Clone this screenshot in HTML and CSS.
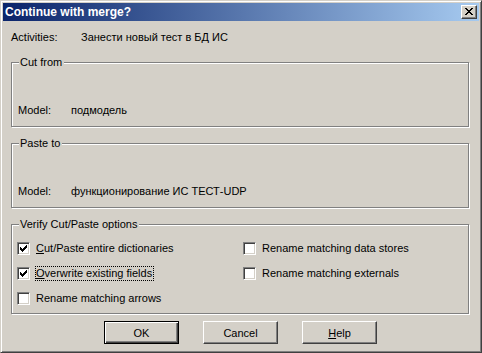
FILE: index.html
```html
<!DOCTYPE html>
<html lang="en">
<head>
<meta charset="utf-8">
<title>Continue with merge?</title>
<link rel="stylesheet" href="styles.css">
</head>
<body>
<div class="window">
  <div class="titlebar">
    <span class="title">Continue with merge?</span>
    <button class="close" aria-label="Close">
      <svg width="8" height="7" viewBox="0 0 8 7" shape-rendering="crispEdges"><path d="M0 0h2v1h-2z M6 0h2v1h-2z M1 1h2v1h-2z M5 1h2v1h-2z M2 2h4v1h-4z M3 3h2v1h-2z M2 4h4v1h-4z M1 5h2v1h-2z M5 5h2v1h-2z M0 6h2v1h-2z M6 6h2v1h-2z" fill="#000"/></svg>
    </button>
  </div>
  <div class="content">
    <div class="activities"><span class="act-label">Activities:</span><span>Занести новый тест в БД ИС</span></div>

    <div class="group info">
      <div class="group-title">Cut from</div>
      <div class="model"><span class="model-label">Model:</span><span>подмодель</span></div>
    </div>

    <div class="group info">
      <div class="group-title">Paste to</div>
      <div class="model"><span class="model-label">Model:</span><span>функционирование ИС ТЕСТ-UDP</span></div>
    </div>

    <div class="group options">
      <div class="group-title">Verify Cut/Paste options</div>
      <div class="opts">
        <div class="opt"><span class="cb"><svg width="11" height="11" viewBox="0 0 11 11" shape-rendering="crispEdges"><path d="M2 4h1v3h-1z M3 5h1v3h-1z M4 6h1v3h-1z M5 5h1v3h-1z M6 4h1v3h-1z M7 3h1v3h-1z M8 2h1v3h-1z" fill="#000"/></svg></span><span class="txt"><u>C</u>ut/Paste entire dictionaries</span></div>
        <div class="opt"><span class="cb"></span><span class="txt">Rename matching data stores</span></div>
        <div class="opt"><span class="cb"><svg width="11" height="11" viewBox="0 0 11 11" shape-rendering="crispEdges"><path d="M2 4h1v3h-1z M3 5h1v3h-1z M4 6h1v3h-1z M5 5h1v3h-1z M6 4h1v3h-1z M7 3h1v3h-1z M8 2h1v3h-1z" fill="#000"/></svg></span><span class="txt focus"><u>O</u>verwrite existing fields</span></div>
        <div class="opt"><span class="cb"></span><span class="txt">Rename matching externals</span></div>
        <div class="opt"><span class="cb"></span><span class="txt">Rename matching arrows</span></div>
      </div>
    </div>

    <div class="buttons">
      <button class="btn default">OK</button>
      <button class="btn">Cancel</button>
      <button class="btn"><u>H</u>elp</button>
    </div>
  </div>
</div>
</body>
</html>
```

FILE: styles.css
```css
html, body {
  margin: 0;
  padding: 0;
  background: #d4d0c8;
}
body {
  font-family: "Liberation Sans", Arial, sans-serif;
  font-size: 11px;
  color: #000;
}
.window {
  width: 482px;
  height: 353px;
  box-sizing: border-box;
  border: 1px solid;
  border-color: #d4d0c8 #404040 #404040 #d4d0c8;
  box-shadow: inset 1px 1px 0 #fff, inset -1px -1px 0 #808080;
  padding: 2px;
  background: #d4d0c8;
  display: flex;
  flex-direction: column;
}
.titlebar {
  height: 18px;
  flex: none;
  display: flex;
  align-items: center;
  justify-content: space-between;
  background: linear-gradient(to right, #0a246a, #a6caf0);
  padding: 0 2px 0 2px;
}
.title {
  color: #fff;
  font-weight: bold;
  font-size: 12px;
  line-height: 18px;
}
.close {
  width: 16px;
  height: 14px;
  box-sizing: border-box;
  padding: 0 0 0 3px;
  margin: 0;
  border: 1px solid;
  border-color: #fff #404040 #404040 #fff;
  box-shadow: inset -1px -1px 0 #808080;
  background: #d4d0c8;
  display: flex;
  align-items: flex-start;
  padding-top: 2px;
}
.close svg { display: block; }
.content {
  display: flex;
  flex-direction: column;
}
.activities {
  margin: 10px 0 0 8px;
  line-height: 13px;
  height: 13px;
  display: flex;
}
.act-label { width: 70px; }
.group {
  margin: 18px 0 0 8px;
  width: 458px;
  box-sizing: border-box;
  border: 1px solid #808080;
  box-shadow: 1px 1px 0 #fff, inset 1px 1px 0 #fff;
  padding: 0 6px 9px 6px;
}
.group + .group { margin-top: 16px; }
.group-title {
  margin: -7px 0 0 1px;
  padding: 0 2px 0 1px;
  width: max-content;
  line-height: 13px;
  background: #d4d0c8;
}
.model {
  margin-top: 35px;
  line-height: 13px;
  display: flex;
}
.model-label { width: 53px; }
.options { padding-bottom: 2px; }
.opts {
  margin: 5px 0 0 -1px;
  display: grid;
  grid-template-columns: 226px 1fr;
  grid-auto-rows: 25px;
  align-items: center;
}
.opt {
  display: flex;
  align-items: center;
}
.cb {
  width: 13px;
  height: 13px;
  box-sizing: border-box;
  border: 1px solid;
  border-color: #808080 #fff #fff #808080;
  box-shadow: inset 1px 1px 0 #404040, inset -1px -1px 0 #d4d0c8;
  background: #fff;
  flex: none;
}
.cb svg { display: block; }
.txt {
  margin-left: 5px;
  line-height: 13px;
  border: 1px dotted transparent;
  padding: 0 1px 0 0;
}
.txt.focus { border-color: #000; }
.buttons {
  margin-top: 7px;
  padding-left: 101px;
  display: flex;
  gap: 24px;
}
.btn {
  width: 75px;
  height: 23px;
  box-sizing: border-box;
  margin: 0;
  padding: 0;
  font-family: "Liberation Sans", Arial, sans-serif;
  font-size: 11px;
  color: #000;
  background: #d4d0c8;
  border: 1px solid;
  border-color: #fff #404040 #404040 #fff;
  box-shadow: inset -1px -1px 0 #808080, inset 1px 1px 0 #d4d0c8;
}
.btn.default {
  border-color: #000;
  box-shadow: inset 1px 1px 0 #fff, inset -1px -1px 0 #404040, inset -2px -2px 0 #808080;
}
```
